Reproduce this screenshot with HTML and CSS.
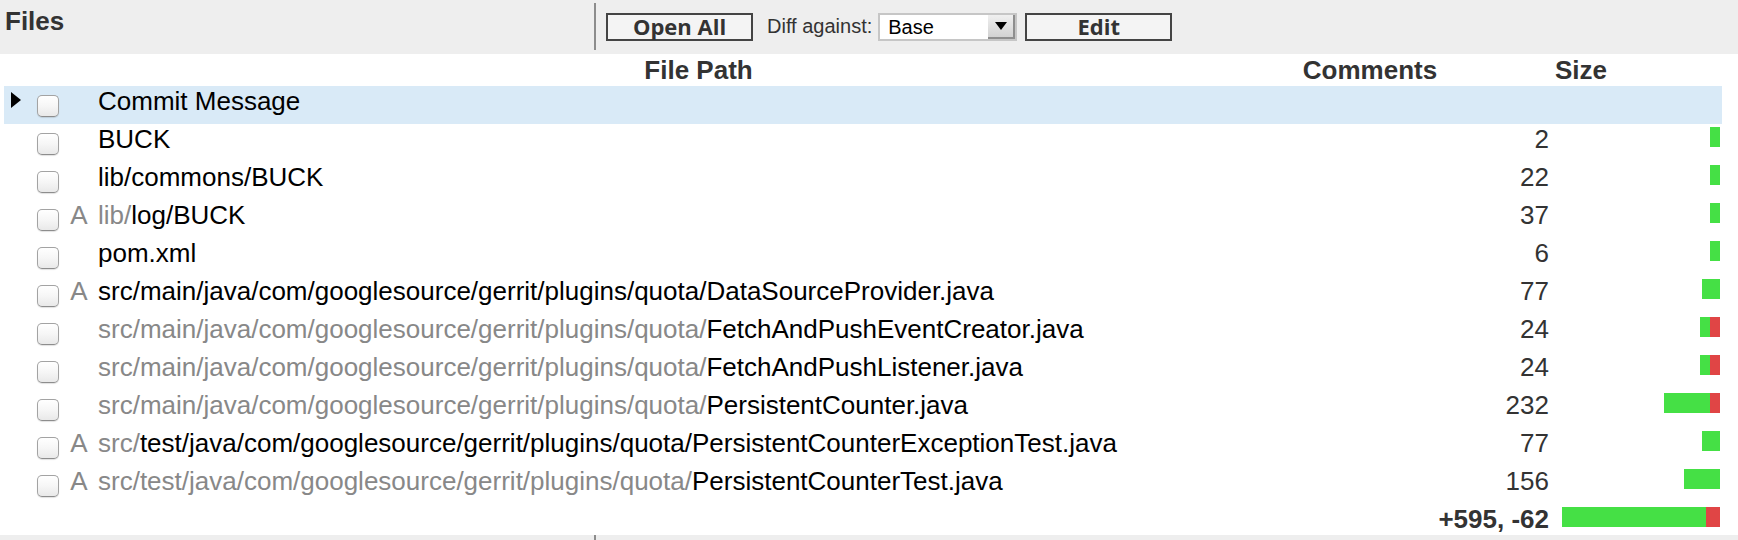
FILE: index.html
```html
<!DOCTYPE html>
<html>
<head>
<meta charset="utf-8">
<link rel="stylesheet" href="styles.css">
</head>
<body>
<div class="page">
  <div class="topbar">
    <div class="title">Files</div>
    <div class="sep"></div>
    <div class="actions">
      <div class="btn">Open All</div>
      <span class="lbl">Diff against:</span>
      <div class="select"><span class="sel-val">Base</span><span class="sel-arrow"><span class="tri-down"></span></span></div>
      <div class="btn btn-edit">Edit</div>
    </div>
  </div>

  <div class="table">
    <div class="row head">
      <div></div><div></div><div></div>
      <div class="h-path">File Path</div>
      <div class="h-center">Comments</div>
      <div class="h-size">Size</div>
    </div>

    <div class="row sel">
      <div class="c-tri"><span class="tri-right"></span></div>
      <div class="c-cb"><span class="cb"></span></div>
      <div class="c-st"></div>
      <div class="c-path">Commit Message</div>
      <div></div><div class="c-num"></div><div class="c-bar"></div>
    </div>

    <div class="row">
      <div class="c-tri"></div>
      <div class="c-cb"><span class="cb"></span></div>
      <div class="c-st"></div>
      <div class="c-path">BUCK</div>
      <div></div><div class="c-num">2</div>
      <div class="c-bar"><span class="ins" style="width:10px"></span></div>
    </div>

    <div class="row">
      <div class="c-tri"></div>
      <div class="c-cb"><span class="cb"></span></div>
      <div class="c-st"></div>
      <div class="c-path">lib/commons/BUCK</div>
      <div></div><div class="c-num">22</div>
      <div class="c-bar"><span class="ins" style="width:10px"></span></div>
    </div>

    <div class="row">
      <div class="c-tri"></div>
      <div class="c-cb"><span class="cb"></span></div>
      <div class="c-st">A</div>
      <div class="c-path"><span class="dim">lib/</span>log/BUCK</div>
      <div></div><div class="c-num">37</div>
      <div class="c-bar"><span class="ins" style="width:10px"></span></div>
    </div>

    <div class="row">
      <div class="c-tri"></div>
      <div class="c-cb"><span class="cb"></span></div>
      <div class="c-st"></div>
      <div class="c-path">pom.xml</div>
      <div></div><div class="c-num">6</div>
      <div class="c-bar"><span class="ins" style="width:10px"></span></div>
    </div>

    <div class="row">
      <div class="c-tri"></div>
      <div class="c-cb"><span class="cb"></span></div>
      <div class="c-st">A</div>
      <div class="c-path">src/main/java/com/googlesource/gerrit/plugins/quota/DataSourceProvider.java</div>
      <div></div><div class="c-num">77</div>
      <div class="c-bar"><span class="ins" style="width:18px"></span></div>
    </div>

    <div class="row">
      <div class="c-tri"></div>
      <div class="c-cb"><span class="cb"></span></div>
      <div class="c-st"></div>
      <div class="c-path"><span class="dim">src/main/java/com/googlesource/gerrit/plugins/quota/</span>FetchAndPushEventCreator.java</div>
      <div></div><div class="c-num">24</div>
      <div class="c-bar"><span class="ins" style="width:10px"></span><span class="del" style="width:10px"></span></div>
    </div>

    <div class="row">
      <div class="c-tri"></div>
      <div class="c-cb"><span class="cb"></span></div>
      <div class="c-st"></div>
      <div class="c-path"><span class="dim">src/main/java/com/googlesource/gerrit/plugins/quota/</span>FetchAndPushListener.java</div>
      <div></div><div class="c-num">24</div>
      <div class="c-bar"><span class="ins" style="width:10px"></span><span class="del" style="width:10px"></span></div>
    </div>

    <div class="row">
      <div class="c-tri"></div>
      <div class="c-cb"><span class="cb"></span></div>
      <div class="c-st"></div>
      <div class="c-path"><span class="dim">src/main/java/com/googlesource/gerrit/plugins/quota/</span>PersistentCounter.java</div>
      <div></div><div class="c-num">232</div>
      <div class="c-bar"><span class="ins" style="width:46px"></span><span class="del" style="width:10px"></span></div>
    </div>

    <div class="row">
      <div class="c-tri"></div>
      <div class="c-cb"><span class="cb"></span></div>
      <div class="c-st">A</div>
      <div class="c-path"><span class="dim">src/</span>test/java/com/googlesource/gerrit/plugins/quota/PersistentCounterExceptionTest.java</div>
      <div></div><div class="c-num">77</div>
      <div class="c-bar"><span class="ins" style="width:18px"></span></div>
    </div>

    <div class="row">
      <div class="c-tri"></div>
      <div class="c-cb"><span class="cb"></span></div>
      <div class="c-st">A</div>
      <div class="c-path"><span class="dim">src/test/java/com/googlesource/gerrit/plugins/quota/</span>PersistentCounterTest.java</div>
      <div></div><div class="c-num">156</div>
      <div class="c-bar"><span class="ins" style="width:36px"></span></div>
    </div>

    <div class="row total">
      <div></div><div></div><div></div><div></div>
      <div class="c-num c-total">+595, -62</div>
      <div class="c-bar"><span class="ins" style="width:144px"></span><span class="del" style="width:14px"></span></div>
    </div>
  </div>

  <div class="bottombar"><div class="sep-tick"></div></div>
</div>
</body>
</html>
```

FILE: styles.css
```css
html, body {
  margin: 0;
  padding: 0;
  background: #fff;
}

.page {
  width: 1738px;
  height: 540px;
  overflow: hidden;
  font-family: "Liberation Sans", Arial, sans-serif;
  color: #000;
}

/* ---------- top bar ---------- */
.topbar {
  display: flex;
  align-items: flex-start;
  height: 54px;
  background: #eeeeee;
}

.title {
  width: 594px;
  box-sizing: border-box;
  padding: 6px 0 0 5px;
  font-size: 26px;
  line-height: 30px;
  font-weight: bold;
  color: #333;
}

.sep {
  width: 2px;
  height: 47px;
  margin-top: 3px;
  background: #8c8c8c;
}

.actions {
  display: flex;
  align-items: flex-start;
  margin-left: 10px;
  padding-top: 13px;
}

.btn {
  width: 147px;
  height: 28px;
  box-sizing: border-box;
  border: 2px solid #444;
  background: #f4f4f4;
  font-family: "Open Sans", "Liberation Sans", sans-serif;
  font-weight: bold;
  font-size: 22px;
  line-height: 22px;
  color: #333;
  display: flex;
  align-items: center;
  justify-content: center;
  padding-bottom: 2px;
}

.btn-edit {
  margin-left: 8px;
}

.lbl {
  margin-left: 14px;
  margin-top: 2px;
  font-size: 20px;
  line-height: 23px;
  color: #333;
}

.select {
  margin-left: 6px;
  width: 139px;
  height: 28px;
  box-sizing: border-box;
  border: 2px solid #c6c6c6;
  background: #fff;
  display: flex;
}

.sel-val {
  padding-left: 8px;
  font-size: 20px;
  line-height: 24px;
  color: #000;
}

.sel-arrow {
  margin-left: auto;
  width: 27px;
  height: 24px;
  box-sizing: border-box;
  background: linear-gradient(to bottom, #f0f0f0, #d2d2d2);
  border-right: 2px solid #8e8e8e;
  border-bottom: 2px solid #8e8e8e;
  display: flex;
  align-items: center;
  justify-content: center;
}

.tri-down {
  width: 0;
  height: 0;
  border-left: 6px solid transparent;
  border-right: 6px solid transparent;
  border-top: 8px solid #000;
}

/* ---------- table ---------- */
.table {
  margin-left: 4px;
  width: 1718px;
}

.row {
  display: grid;
  grid-template-columns: 33px 22px 38px 1203px 140px 113px 169px;
  height: 38px;
  font-size: 26px;
  line-height: 30px;
}

.row.head {
  height: 32px;
  padding-top: 1px;
  box-sizing: border-box;
  font-weight: bold;
  color: #333;
}

.h-path, .h-center {
  text-align: center;
}

.h-size {
  grid-column: 6 / 8;
  text-align: center;
}

.row.sel {
  background: #d9eaf7;
}

.row.total {
  height: 31px;
}

.c-tri {
  padding: 6px 0 0 7px;
}

.tri-right {
  display: block;
  width: 0;
  height: 0;
  border-top: 8px solid transparent;
  border-bottom: 8px solid transparent;
  border-left: 10px solid #000;
}

.c-cb {
  padding-top: 9px;
}

.cb {
  display: block;
  width: 22px;
  height: 22px;
  box-sizing: border-box;
  border: 1px solid #a3a3a3;
  border-bottom-color: #8d8d8d;
  border-radius: 5px;
  background: linear-gradient(to bottom, #ffffff 0%, #f6f6f6 50%, #e9e9e9 100%);
  box-shadow: 0 1px 1px rgba(0, 0, 0, 0.12);
}

.c-st {
  text-align: center;
  color: #888;
  padding-left: 2px;
}

.c-path {
  white-space: nowrap;
  padding-left: 1px;
}

.dim {
  color: #888;
}

.c-num {
  text-align: right;
  padding-right: 4px;
  color: #333;
  white-space: nowrap;
}

.c-total {
  grid-column: 5 / 7;
  font-weight: bold;
}

.c-bar {
  display: flex;
  justify-content: flex-end;
  align-items: flex-start;
  padding: 3px 2px 0 0;
}

.ins, .del {
  display: block;
  height: 20px;
}

.ins {
  background: #45e045;
}

.del {
  background: #e04545;
}

/* ---------- bottom ---------- */
.bottombar {
  height: 5px;
  background: #eeeeee;
  display: flex;
}

.sep-tick {
  margin-left: 594px;
  width: 2px;
  height: 5px;
  background: #8c8c8c;
}
```
